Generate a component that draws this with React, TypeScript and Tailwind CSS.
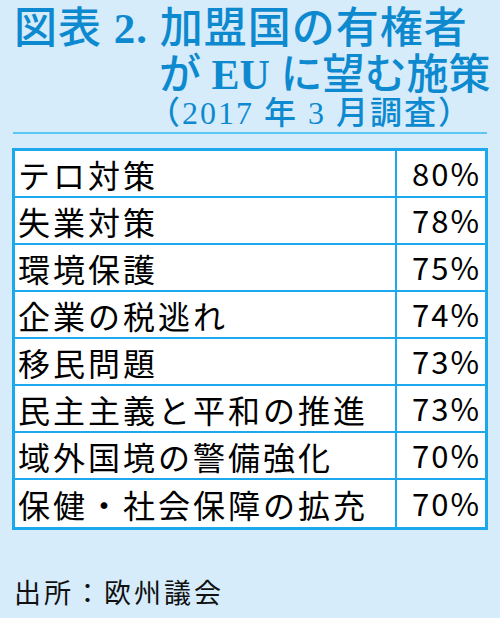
const rows = [
  { label: 'テロ対策', value: '80%' },
  { label: '失業対策', value: '78%' },
  { label: '環境保護', value: '75%' },
  { label: '企業の税逃れ', value: '74%' },
  { label: '移民問題', value: '73%' },
  { label: '民主主義と平和の推進', value: '73%' },
  { label: '域外国境の警備強化', value: '70%' },
  { label: '保健・社会保障の拡充', value: '70%' },
]

const titleFont = "font-['Liberation_Serif','Noto_Sans_CJK_JP',serif]"
const bodyFont = "font-['Noto_Sans_CJK_JP',sans-serif]"

export default function App() {
  return (
    <div className="w-[500px] h-[618px] overflow-hidden bg-[#d6ecfb]">
      <div className={`pt-[6px] pl-[14px] text-[#0d89cf] font-medium ${titleFont}`}>
        <div className="text-[43px] leading-[46px] tracking-[1px] whitespace-nowrap">
          図表 <span className="font-bold">2.</span> 加盟国の有権者
        </div>
        <div className="pl-[145px] text-[42px] leading-[46px] whitespace-nowrap">
          が <span className="font-bold">EU</span> に望む施策
        </div>
        <div className="pl-[134px] text-[32px] leading-[30px] tracking-[2px] whitespace-nowrap">（2017 年 3 月調査）</div>
      </div>

      <div className="mx-[13px] mt-[4px] h-[2px] bg-[#5cc6f5]" />

      <div className={`mx-[12px] mt-[14px] border-[3px] border-[#1ba8ec] bg-white text-black ${bodyFont}`}>
        {rows.map((row, i) => (
          <div
            key={row.label}
            className={`flex h-[47px] ${i < rows.length - 1 ? 'border-b-2 border-[#1ba8ec]' : ''}`}
          >
            <div className="flex-1 flex items-center border-r-2 border-[#1ba8ec] pl-[3px] text-[32px] tracking-[3px] whitespace-nowrap">
              {row.label}
            </div>
            <div className="w-[88px] flex items-center justify-end pr-[4px] text-[31px] tracking-[2px]">
              {row.value}
            </div>
          </div>
        ))}
      </div>

      <div className={`mt-[42px] pl-[14px] text-[27px] tracking-[3px] text-[#111] ${bodyFont}`}>
        出所：欧州議会
      </div>
    </div>
  )
}
